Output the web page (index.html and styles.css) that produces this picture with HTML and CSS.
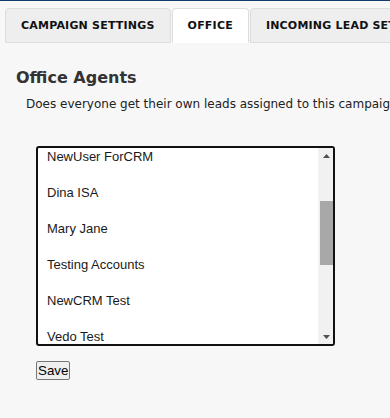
FILE: index.html
```html
<!DOCTYPE html>
<html lang="en">
<head>
<meta charset="utf-8">
<title>Office Agents</title>
<link rel="stylesheet" href="styles.css">
</head>
<body>
<div class="topline"></div>
<nav class="tabs">
  <div class="tab">CAMPAIGN SETTINGS</div>
  <div class="tab active">OFFICE</div>
  <div class="tab">INCOMING LEAD SETTINGS</div>
</nav>
<section class="panel">
  <h2 class="title">Office Agents</h2>
  <p class="desc">Does everyone get their own leads assigned to this campaign?</p>
  <div class="listbox">
    <ul class="options">
      <li class="option first">NewUser ForCRM</li>
      <li class="option">Dina ISA</li>
      <li class="option">Mary Jane</li>
      <li class="option">Testing Accounts</li>
      <li class="option">NewCRM Test</li>
      <li class="option">Vedo Test</li>
    </ul>
    <div class="scrollbar">
      <div class="sb-btn"><svg width="7" height="4" viewBox="0 0 7 4"><polygon points="0,4 7,4 3.5,0" fill="#505050"/></svg></div>
      <div class="sb-track"><div class="sb-thumb"></div></div>
      <div class="sb-btn"><svg width="7" height="4" viewBox="0 0 7 4"><polygon points="0,0 7,0 3.5,4" fill="#505050"/></svg></div>
    </div>
  </div>
  <button class="save" type="button">Save</button>
</section>
</body>
</html>
```
FILE: styles.css
```css
html, body {
  margin: 0;
  padding: 0;
}
body {
  background: #f7f7f7;
  overflow: hidden;
  width: 390px;
  height: 418px;
  font-family: "DejaVu Sans", Verdana, sans-serif;
}
.topline {
  height: 1px;
  background: #123c6c;
}
.tabs {
  display: flex;
  margin-top: 7px;
  padding-left: 5px;
  white-space: nowrap;
}
.tab {
  flex: none;
  border: 1px solid #dddddd;
  border-radius: 4px 4px 0 0;
  background: #eeeeee;
  padding: 0 15px;
  margin-right: 1px;
  line-height: 33px;
  font-size: 11px;
  letter-spacing: 0.2px;
  font-weight: bold;
  color: #111;
}
.tab.active {
  background: #ffffff;
  border-bottom-color: #ffffff;
}
.panel {
  padding: 0 15px;
}
.title {
  margin: 25px 0 0 1px;
  font-size: 16px;
  line-height: 20px;
  font-weight: bold;
  color: #333333;
}
.desc {
  margin: 9px 0 0 11px;
  font-size: 12px;
  line-height: 15px;
  color: #222222;
  white-space: nowrap;
}
.listbox {
  box-sizing: border-box;
  margin: 34px 0 0 21px;
  width: 299px;
  height: 200px;
  border: 2px solid #111111;
  border-radius: 3px;
  background: #ffffff;
  display: flex;
  overflow: hidden;
}
.options {
  flex: 1;
  list-style: none;
  margin: 0;
  padding: 0;
  overflow: hidden;
  font-family: "Liberation Sans", Arial, sans-serif;
  font-size: 13px;
  line-height: 16px;
  color: #1a1a1a;
}
.option {
  padding: 10px 9px;
}
.option.first {
  margin-top: -9px;
}
.scrollbar {
  flex: none;
  width: 15px;
  background: #f1f1f1;
  display: flex;
  flex-direction: column;
}
.sb-btn {
  height: 15px;
  display: flex;
  align-items: center;
  justify-content: center;
  padding-left: 1px;
}
.sb-track {
  flex: 1;
  display: flex;
  flex-direction: column;
}
.sb-thumb {
  margin: 38px 0 0 2px;
  height: 64px;
  background: #a8a8a8;
}
.save {
  display: block;
  margin: 15px 0 0 21px;
  padding: 0 1px;
  height: 19px;
  font-family: "Liberation Sans", Arial, sans-serif;
  font-size: 13.33px;
  color: #000;
  background: #efefef;
  border: 1px solid #767676;
  border-radius: 2px;
}
```
